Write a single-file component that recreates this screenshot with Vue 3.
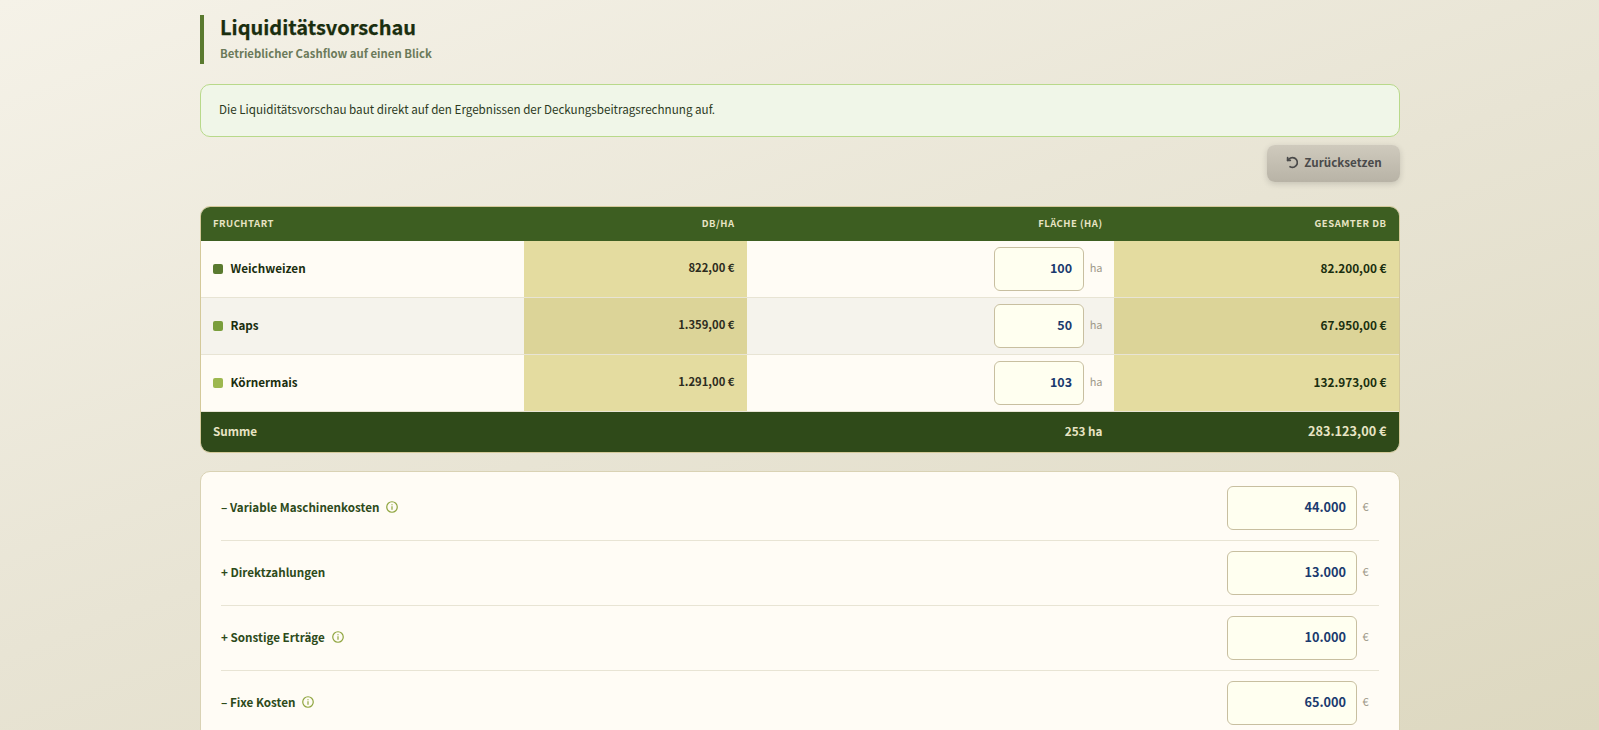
<script setup>
const crops = [
  { name: 'Weichweizen', color: '#5a7a2f', perHa: '822,00 €', area: 100, total: '82.200,00 €' },
  { name: 'Raps', color: '#7a9e3c', perHa: '1.359,00 €', area: 50, total: '67.950,00 €' },
  { name: 'Körnermais', color: '#9db84f', perHa: '1.291,00 €', area: 103, total: '132.973,00 €' },
]
const items = [
  { label: '– Variable Maschinenkosten', info: true, value: '44.000' },
  { label: '+ Direktzahlungen', info: false, value: '13.000' },
  { label: '+ Sonstige Erträge', info: true, value: '10.000' },
  { label: '– Fixe Kosten', info: true, value: '65.000' },
]
</script>

<template>
  <div class="page">
    <main class="wrap">
      <header class="head">
        <h1>Liquiditätsvorschau</h1>
        <p>Betrieblicher Cashflow auf einen Blick</p>
      </header>

      <div class="note"><span>Die Liquiditätsvorschau baut direkt auf den Ergebnissen der Deckungsbeitragsrechnung auf.</span></div>

      <div class="actions">
        <button class="reset" type="button">
          <svg width="13" height="13" viewBox="0 0 24 24" fill="none" stroke="currentColor" stroke-width="3.2" stroke-linecap="round" stroke-linejoin="round">
            <path d="M7.5 19.8a9 9 0 1 0 4.5-16.8 9.75 9.75 0 0 0-6.74 2.74L3 8" />
            <path d="M3 3v5h5" />
          </svg>
          <span>Zurücksetzen</span>
        </button>
      </div>

      <table class="crops">
        <colgroup>
          <col class="c1" /><col class="c2" /><col class="c3" /><col class="c4" />
        </colgroup>
        <thead>
          <tr>
            <th class="left">Fruchtart</th>
            <th>DB/ha</th>
            <th class="third">Fläche (ha)</th>
            <th>Gesamter DB</th>
          </tr>
        </thead>
        <tbody>
          <tr v-for="c in crops" :key="c.name">
            <td class="name"><span class="dot" :style="{ background: c.color }"></span>{{ c.name }}</td>
            <td class="hl perha">{{ c.perHa }}</td>
            <td class="area third">
              <div class="area-in">
                <span class="input small">{{ c.area }}</span>
                <span class="unit">ha</span>
              </div>
            </td>
            <td class="hl total">{{ c.total }}</td>
          </tr>
        </tbody>
        <tfoot>
          <tr>
            <td class="left" colspan="2">Summe</td>
            <td class="third">253 ha</td>
            <td class="grand">283.123,00 €</td>
          </tr>
        </tfoot>
      </table>

      <section class="card">
        <div v-for="it in items" :key="it.label" class="row">
          <div class="label">
            <span>{{ it.label }}</span>
            <svg v-if="it.info" width="12" height="12" viewBox="0 0 13 13" fill="none" stroke="#8fa53f" stroke-width="1.3">
              <circle cx="6.5" cy="6.5" r="5.7" />
              <path d="M6.5 5.8v3.6M6.5 3.4v1.1" />
            </svg>
          </div>
          <div class="val">
            <span class="input wide">{{ it.value }}</span>
            <span class="unit">€</span>
          </div>
        </div>
      </section>
    </main>
  </div>
</template>

<style>
html, body { margin: 0; overflow: hidden; }
</style>

<style scoped>
.page {
  height: 730px;
  overflow: hidden;
  background: linear-gradient(160deg, #f5f2e8 0%, #e8e4d4 50%, #ddd8c0 100%);
  font-family: "Noto Sans CJK SC", "Noto Sans", sans-serif;
  color: #1a2e0f;
}
.wrap {
  width: 1200px;
  margin: 0 auto;
  padding-top: 15px;
}
.head {
  display: flow-root;
  border-left: 4px solid #5a7a2f;
  padding-left: 16.5px;
  height: 49px;
  margin-bottom: 20px;
}
h1 {
  margin: -1px 0 0;
  font-size: 20px;
  line-height: 26px;
  font-weight: 700;
  color: #1a2e0f;
  -webkit-text-stroke: 0.25px #1a2e0f;
}
.head p {
  margin: 3px 0 0;
  font-size: 11.35px;
  line-height: 20px;
  font-weight: 700;
  color: #6b7a5a;
}
.note {
  height: 53px;
  box-sizing: border-box;
  display: flex;
  align-items: center;
  padding: 0 18.5px;
  background: #f0f6e8;
  border: 1px solid #b8d98a;
  border-radius: 10px;
  font-size: 11.65px;
  color: #2c3a1e;
}
.note span { margin-top: -5px; }
.actions {
  display: flex;
  justify-content: flex-end;
  margin: 8px 0 24px;
}
.reset {
  width: 133px;
  height: 37px;
  display: flex;
  align-items: center;
  justify-content: center;
  gap: 5px;
  padding: 0 0 0 1px;
  border: none;
  border-radius: 8px;
  background: linear-gradient(180deg, #cfcabd, #b8b3a6);
  box-shadow: 0 2px 6px rgba(0, 0, 0, 0.15);
  color: #4a4a4a;
  font: 700 11.65px "Noto Sans CJK SC", sans-serif;
}
.reset span { margin-top: -4px; }
.reset svg { margin: -2px 0 0 1px; }
.crops {
  width: 1200px;
  table-layout: fixed;
  border-collapse: separate;
  border-spacing: 0;
  border: 1px solid #d4c99a;
  border-radius: 10px;
  overflow: hidden;
  background: #fffcf5;
  font-size: 11.7px;
}
.c1 { width: 323px; }
.c2 { width: 223px; }
.c3 { width: 367px; }
.crops th {
  height: 34px;
  padding: 0 12px 2px;
  box-sizing: border-box;
  background: #3d5e21;
  color: #e8e4c4;
  font-size: 9.5px;
  font-weight: 700;
  letter-spacing: 0.5px;
  text-transform: uppercase;
  text-align: right;
}
.crops th.left, .crops td.left { text-align: left; padding-left: 12.5px; }
.crops tbody td {
  height: 57px;
  padding: 0 12px 4px;
  box-sizing: border-box;
  border-bottom: 1px solid #e8e4d4;
  text-align: right;
}
.crops tbody td.area { padding-bottom: 0; }
.crops .third, .crops tbody td.third { padding-right: 11px; }
.crops tbody tr:nth-child(even) td { background: #f5f3ec; }
.crops tbody td.hl { background: #e4dca0; }
.crops tbody tr:nth-child(even) td.hl { background: #dcd498; }
.crops td.name {
  text-align: left;
  font-weight: 700;
  color: #1a2e0f;
}
.dot {
  display: inline-block;
  width: 10px;
  height: 10px;
  border-radius: 2px;
  margin-right: 8px;
  vertical-align: -1px;
}
.perha { font-weight: 700; color: #2c2c1e; font-size: 11.25px; }
.total { font-weight: 700; color: #1a2e0f; font-size: 11.8px; }
.area-in {
  display: flex;
  justify-content: flex-end;
  align-items: center;
  gap: 6px;
}
.input {
  height: 44px;
  box-sizing: border-box;
  display: flex;
  align-items: center;
  justify-content: flex-end;
  padding: 0 9.5px 4px;
  background: #fffff0;
  border: 1px solid #c8bfa0;
  border-radius: 6px;
  color: #1a3a6e;
  font-weight: 700;
  font-size: 12.7px;
}
.small { width: 90px; padding-right: 10.5px; font-size: 12.5px; }
.wide { width: 130px; }
.unit { font-size: 11px; color: #a09a8a; margin-top: -4px; }
.crops tfoot td {
  height: 40px;
  padding: 0 12px 4px;
  box-sizing: border-box;
  background: #2f4a19;
  color: #e8e4c4;
  font-weight: 700;
  text-align: right;
}
.crops tfoot td.grand { font-size: 12.7px; }
.card {
  margin-top: 18px;
  padding: 4px 20px;
  background: #fffcf5;
  border: 1px solid #d9d2b4;
  border-radius: 10px;
}
.row {
  display: flex;
  justify-content: space-between;
  align-items: center;
  height: 64px;
  border-bottom: 1px solid #e8e4d4;
}
.label {
  display: flex;
  align-items: center;
  gap: 7px;
  padding-left: 0.5px;
  font-size: 11.65px;
  font-weight: 700;
  color: #2d4a1a;
  margin-top: -4px;
}
.label svg { margin-top: 1px; }
.val {
  display: flex;
  align-items: center;
  gap: 6px;
  padding-right: 9px;
}
.val .unit { width: 7px; }
</style>
